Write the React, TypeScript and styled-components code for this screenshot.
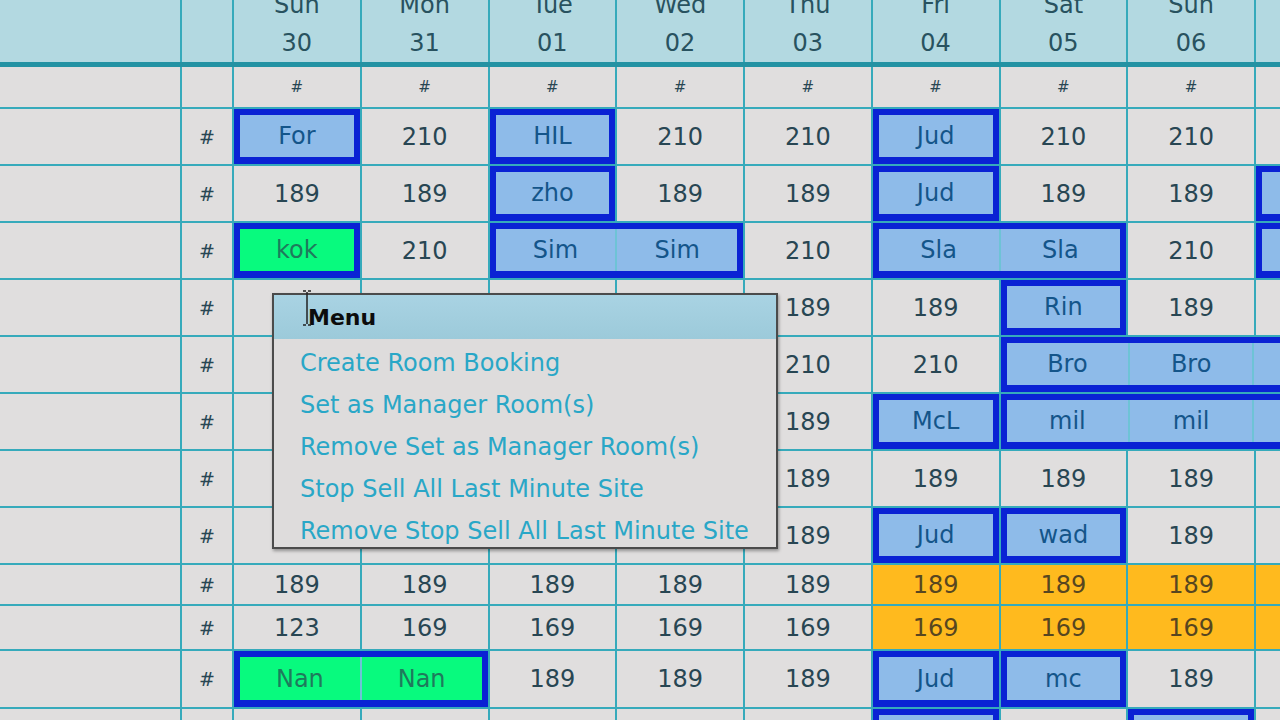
import styled, { createGlobalStyle } from "styled-components";

const GlobalStyle = createGlobalStyle`
    html, body {
        margin: 0;
        padding: 0;
        background: #e0dede;
    }
`;

const LINE = "#36aabb";

const Page = styled.div`
    position: relative;
    width: 1280px;
    height: 720px;
    overflow: hidden;
    background: #e0dede;
    font-family: "DejaVu Sans", Verdana, sans-serif;
`;

const Sheet = styled.div`
    margin-top: -15px;
`;

const Row = styled.div<{ $h: number; $line?: number; $lineColor?: string }>`
    display: grid;
    grid-template-columns: 180px 50px repeat(9, 125.75px);
    column-gap: 2px;
    height: ${(p) => p.$h}px;
    background: ${LINE};
    border-bottom: ${(p) => p.$line ?? 2}px solid ${(p) => p.$lineColor ?? LINE};
`;

const HeadCell = styled.div`
    background: #b3d9e1;
    display: flex;
    flex-direction: column;
    align-items: center;
    justify-content: center;
    color: #28525f;
    font-size: 24px;
    line-height: 38px;
`;

const Cell = styled.div<{ $orange?: boolean; $hash?: number }>`
    background: ${(p) => (p.$orange ? "#ffba1e" : "#e0dede")};
    display: flex;
    align-items: center;
    justify-content: center;
    color: ${(p) => (p.$orange ? "#574620" : "#284653")};
    font-size: ${(p) => p.$hash ?? 24}px;
`;

const Block = styled.div<{ $span: number }>`
    grid-column: span ${(p) => p.$span};
    border: 6px solid #0a22d4;
    border-bottom-width: 7px;
    background: #6ec3d6;
    display: grid;
    grid-template-columns: repeat(${(p) => p.$span}, 1fr);
    column-gap: 2px;
`;

const Seg = styled.div<{ $green?: boolean }>`
    background: ${(p) => (p.$green ? "#08fa7e" : "#8ebbe9")};
    color: ${(p) => (p.$green ? "#1f7a5c" : "#14558a")};
    display: flex;
    align-items: center;
    justify-content: center;
    font-size: 24px;
`;

const Menu = styled.div`
    position: absolute;
    left: 272px;
    top: 293px;
    width: 502px;
    height: 252px;
    border: 2px solid #4b4b4b;
    background: #dedcdc;
    box-shadow: 1px 2px 3px rgba(0, 0, 0, 0.35);
`;

const MenuHead = styled.div`
    height: 44px;
    background: linear-gradient(#a9d3e3, #9ccada);
    display: flex;
    align-items: center;
    padding-left: 34px;
    font-size: 22px;
    font-weight: bold;
    color: #0c0c0c;
`;

const MenuList = styled.div`
    padding-top: 3px;
`;

const MenuItem = styled.div`
    height: 42px;
    line-height: 42px;
    padding-left: 26px;
    font-size: 24px;
    color: #29a7c7;
    white-space: nowrap;
`;

const Cursor = styled.svg`
    position: absolute;
    left: 300px;
    top: 289px;
`;

type Seat =
    | string
    | { kind: "blue" | "green"; labels: string[] }
    | { kind: "orange"; v: string };

const b = (...labels: string[]): Seat => ({ kind: "blue", labels });
const g = (...labels: string[]): Seat => ({ kind: "green", labels });
const o = (v: string): Seat => ({ kind: "orange", v });

const days = [
    ["Sun", "30"],
    ["Mon", "31"],
    ["Tue", "01"],
    ["Wed", "02"],
    ["Thu", "03"],
    ["Fri", "04"],
    ["Sat", "05"],
    ["Sun", "06"],
    ["Mon", "07"],
];

const rows: { h: number; cells: Seat[] }[] = [
    { h: 55, cells: [b("For"), "210", b("HIL"), "210", "210", b("Jud"), "210", "210", ""] },
    { h: 55, cells: ["189", "189", b("zho"), "189", "189", b("Jud"), "189", "189", b("")] },
    { h: 55, cells: [g("kok"), "210", b("Sim", "Sim"), "210", b("Sla", "Sla"), "210", b("")] },
    { h: 55, cells: ["", "", "", "", "189", "189", b("Rin"), "189", ""] },
    { h: 55, cells: ["", "", "", "", "210", "210", b("Bro", "Bro", "")] },
    { h: 55, cells: ["", "", "", "", "189", b("McL"), b("mil", "mil", "")] },
    { h: 55, cells: ["", "", "", "", "189", "189", "189", "189", ""] },
    { h: 55, cells: ["", "", "", "", "189", b("Jud"), b("wad"), "189", ""] },
    { h: 39, cells: ["189", "189", "189", "189", "189", o("189"), o("189"), o("189"), o("")] },
    { h: 43, cells: ["123", "169", "169", "169", "169", o("169"), o("169"), o("169"), o("")] },
    { h: 56, cells: [g("Nan", "Nan"), "189", "189", "189", b("Jud"), b("mc"), "189", ""] },
    { h: 55, cells: ["", "", "", "", "", b(""), "", b(""), ""] },
];

const menuItems = [
    "Create Room Booking",
    "Set as Manager Room(s)",
    "Remove Set as Manager Room(s)",
    "Stop Sell All Last Minute Site",
    "Remove Stop Sell All Last Minute Site",
];

const renderSeat = (s: Seat, i: number) => {
    if (typeof s === "string") return <Cell key={i}>{s}</Cell>;
    if (s.kind === "orange")
        return (
            <Cell key={i} $orange>
                {s.v}
            </Cell>
        );
    return (
        <Block key={i} $span={s.labels.length}>
            {s.labels.map((l, j) => (
                <Seg key={j} $green={s.kind === "green"}>
                    {l}
                </Seg>
            ))}
        </Block>
    );
};

const App = () => {
    return (
        <Page>
            <GlobalStyle />
            <Sheet>
                <Row $h={77} $line={5} $lineColor="#2392a3">
                    <HeadCell />
                    <HeadCell />
                    {days.map(([d, n], i) => (
                        <HeadCell key={i}>
                            <span>{d}</span>
                            <span>{n}</span>
                        </HeadCell>
                    ))}
                </Row>
                <Row $h={40}>
                    <Cell />
                    <Cell />
                    {days.map((_, i) => (
                        <Cell key={i} $hash={15}>
                            #
                        </Cell>
                    ))}
                </Row>
                {rows.map((r, i) => (
                    <Row key={i} $h={r.h}>
                        <Cell />
                        <Cell $hash={19}>#</Cell>
                        {r.cells.map(renderSeat)}
                    </Row>
                ))}
            </Sheet>
            <Menu>
                <MenuHead>Menu</MenuHead>
                <MenuList>
                    {menuItems.map((m) => (
                        <MenuItem key={m}>{m}</MenuItem>
                    ))}
                </MenuList>
            </Menu>
            <Cursor width="14" height="38" viewBox="0 0 14 38">
                <path d="M3 2h3M8 2h3M7 3v32M3 36h3M8 36h3" stroke="#222" strokeWidth="1.5" fill="none" />
            </Cursor>
        </Page>
    );
};

export default App;
